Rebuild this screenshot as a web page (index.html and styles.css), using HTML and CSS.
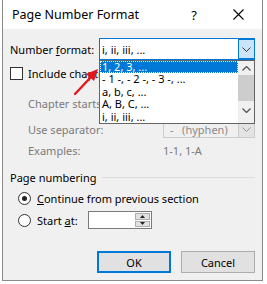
FILE: index.html
```html
<!DOCTYPE html>
<html lang="en">
<head>
  <meta charset="UTF-8" />
  <title>Page Number Format</title>
  <link rel="stylesheet" href="styles.css">
</head>
<body>
  <div class="dialog">
    <div class="titlebar">
      <span class="title">Page Number Format</span>
      <span class="help">?</span>
      <svg class="close" width="11" height="11" viewBox="0 0 11 11">
        <path d="M0.5 0.5 L10.5 10.5 M10.5 0.5 L0.5 10.5" stroke="#000" stroke-width="1.1" fill="none"/>
      </svg>
    </div>

    <div class="content">
      <div class="row row-format">
        <label class="label">Number <u>f</u>ormat:</label>
        <div class="combo open">
          <span class="combo-text">i, ii, iii, ...</span>
          <span class="combo-btn">
            <svg width="9" height="5" viewBox="0 0 9 5"><path d="M0.5 0.5 L4.5 4.5 L8.5 0.5" stroke="#333" fill="none"/></svg>
          </span>
        </div>
      </div>

      <div class="row row-check">
        <span class="checkbox"></span>
        <span>Include chapter number</span>
      </div>

      <div class="row row-chapter muted indent">
        <span>Chapter starts with style:</span>
      </div>

      <div class="row row-sep muted indent">
        <span class="col-label">Use separator:</span>
        <div class="combo disabled">
          <span class="combo-text">-&nbsp;&nbsp;&nbsp;(hyphen)</span>
          <span class="combo-btn">
            <svg width="9" height="5" viewBox="0 0 9 5"><path d="M0.5 0.5 L4.5 4.5 L8.5 0.5" stroke="#999" fill="none"/></svg>
          </span>
        </div>
      </div>

      <div class="row row-examples muted indent">
        <span class="col-label">Examples:</span>
        <span>1-1, 1-A</span>
      </div>

      <div class="row row-group">
        <span>Page numbering</span>
        <span class="group-line"></span>
      </div>

      <div class="row row-radio1">
        <span class="radio checked"></span>
        <span><u>C</u>ontinue from previous section</span>
      </div>

      <div class="row row-radio2">
        <span class="radio"></span>
        <span class="start-label">Start <u>a</u>t:</span>
        <div class="spin">
          <span class="spin-field"></span>
          <span class="spin-btns">
            <span class="spin-up"><svg width="5" height="3" viewBox="0 0 5 3"><path d="M2.5 0 L5 3 L0 3 Z" fill="#222"/></svg></span>
            <span class="spin-down"><svg width="5" height="3" viewBox="0 0 5 3"><path d="M0 0 L5 0 L2.5 3 Z" fill="#222"/></svg></span>
          </span>
        </div>
      </div>

      <div class="row row-buttons">
        <button class="btn default">OK</button>
        <button class="btn">Cancel</button>
      </div>
    </div>

    <!-- open dropdown list -->
    <div class="dropdown">
      <ul class="options">
        <li class="selected">1, 2, 3, ...</li>
        <li>- 1 -, - 2 -, - 3 -, ...</li>
        <li>a, b, c, ...</li>
        <li>A, B, C, ...</li>
        <li>i, ii, iii, ...</li>
      </ul>
      <div class="scrollbar">
        <svg class="sb-arrow" width="9" height="5" viewBox="0 0 9 5"><path d="M0.5 4.5 L4.5 0.5 L8.5 4.5" stroke="#555" stroke-width="1.3" fill="none"/></svg>
        <span class="sb-thumb"></span>
        <svg class="sb-arrow down" width="9" height="5" viewBox="0 0 9 5"><path d="M0.5 0.5 L4.5 4.5 L8.5 0.5" stroke="#555" stroke-width="1.3" fill="none"/></svg>
      </div>
    </div>

    <!-- red annotation arrow -->
    <svg class="arrow" width="30" height="30" viewBox="0 0 30 30">
      <path d="M2 27 L18 10" stroke="#e3161b" stroke-width="2.4" stroke-linecap="round" fill="none"/>
      <path d="M25 2 L13 7 L21 14 Z" fill="#e3161b"/>
    </svg>
  </div>
</body>
</html>
```

FILE: styles.css
```css
body {
  margin: 0;
  background: #fff;
  font-family: "Noto Sans", "Open Sans", sans-serif;
  font-size: 11px;
  color: #000;
}

.dialog {
  position: relative;
  width: 259px;
  height: 280px;
  margin-left: 2px;
  border: 1px solid #8a8a8a;
  border-top: none;
  background: #f0f0f0;
  box-sizing: content-box;
}

.titlebar {
  display: flex;
  align-items: center;
  height: 29px;
  background: #fff;
  padding-left: 9px;
}

.title {
  flex: 1;
  font-size: 12.5px;
}

.help {
  margin-right: 36px;
  font-size: 13px;
}

.close {
  margin-right: 18px;
}

.content {
  padding: 0 7px;
}

.row {
  display: flex;
  align-items: center;
  height: 14px;
  white-space: nowrap;
}

.indent {
  padding-left: 18px;
}

.muted {
  color: #7a7a7a;
}

.label {
  width: 89px;
}

.col-label {
  width: 135px;
}

.row-format {
  margin-top: 9px;
  height: 22px;
}

.combo {
  display: flex;
  align-items: center;
  width: 156px;
  height: 100%;
  box-sizing: border-box;
  border: 1px solid #0078d7;
  background: #fff;
}

.combo-text {
  flex: 1;
  padding-left: 2px;
}

.combo-btn {
  display: flex;
  align-items: center;
  justify-content: center;
  width: 16px;
  height: 100%;
  box-sizing: border-box;
  border: 1px solid #0078d7;
  border-right: none;
  background: #cce4f7;
}

.combo.disabled {
  width: 92px;
  border-color: #cccccc;
  background: #f0f0f0;
  color: #8a8a8a;
}

.combo.disabled .combo-text {
  padding-left: 6px;
}

.combo.disabled .combo-btn {
  border: none;
  border-left: 1px solid #cccccc;
  background: #e3e3e3;
}

.row-check {
  margin-top: 6px;
  gap: 5px;
}

.checkbox {
  width: 13px;
  height: 13px;
  box-sizing: border-box;
  border: 1px solid #333;
  background: #fff;
}

.row-chapter {
  margin-top: 16px;
}

.row-sep {
  margin-top: 10px;
  height: 18px;
}

.row-examples {
  margin-top: 5px;
}

.row-group {
  margin-top: 13px;
  gap: 6px;
}

.group-line {
  flex: 1;
  height: 1px;
  background: #dcdcdc;
}

.row-radio1 {
  margin-top: 7px;
  padding-left: 8px;
  gap: 6px;
}

.row-radio2 {
  margin-top: 6px;
  height: 18px;
  padding-left: 8px;
  gap: 6px;
}

.radio {
  width: 13px;
  height: 13px;
  box-sizing: border-box;
  border: 1px solid #333;
  border-radius: 50%;
  background: #fff;
  position: relative;
}

.radio.checked::after {
  content: "";
  position: absolute;
  left: 3px;
  top: 3px;
  width: 5px;
  height: 5px;
  border-radius: 50%;
  background: #222;
}

.start-label {
  width: 45px;
}

.spin {
  display: flex;
  width: 64px;
  height: 18px;
  box-sizing: border-box;
  border: 1px solid #7a7a7a;
  background: #fff;
}

.spin-field {
  flex: 1;
}

.spin-btns {
  display: flex;
  flex-direction: column;
  width: 15px;
  padding: 1px 1px 1px 0;
  gap: 1px;
}

.spin-up,
.spin-down {
  flex: 1;
  display: flex;
  align-items: center;
  justify-content: center;
  background: #e1e1e1;
  border: 1px solid #adadad;
}

.row-buttons {
  margin-top: 22px;
  height: 22px;
  justify-content: flex-end;
  gap: 10px;
}

.btn {
  width: 74px;
  height: 22px;
  font-family: inherit;
  font-size: 11px;
  color: #000;
  background: #e1e1e1;
  border: 1px solid #adadad;
  padding: 0;
}

.btn.default {
  border: 2px solid #0078d7;
}

.dropdown {
  position: absolute;
  left: 96px;
  top: 60px;
  width: 156px;
  height: 64px;
  box-sizing: border-box;
  display: flex;
  border: 1px solid #646464;
  background: #fff;
}

.options {
  flex: 1;
  list-style: none;
  margin: 0;
  padding: 0;
}

.options li {
  height: 12.4px;
  line-height: 12.4px;
  padding-left: 2px;
  white-space: nowrap;
}

.options li.selected {
  color: #fff;
  background: #0078d7;
  outline: 1px dotted #fff;
  outline-offset: -1px;
}

.scrollbar {
  width: 16px;
  display: flex;
  flex-direction: column;
  align-items: center;
  background: #f0f0f0;
}

.sb-arrow {
  margin: 5px 0 4px;
}

.sb-arrow.down {
  margin: 7px 0 0;
}

.sb-thumb {
  width: 16px;
  height: 26px;
  background: #cdcdcd;
}

.arrow {
  position: absolute;
  left: 70px;
  top: 67px;
}
```
